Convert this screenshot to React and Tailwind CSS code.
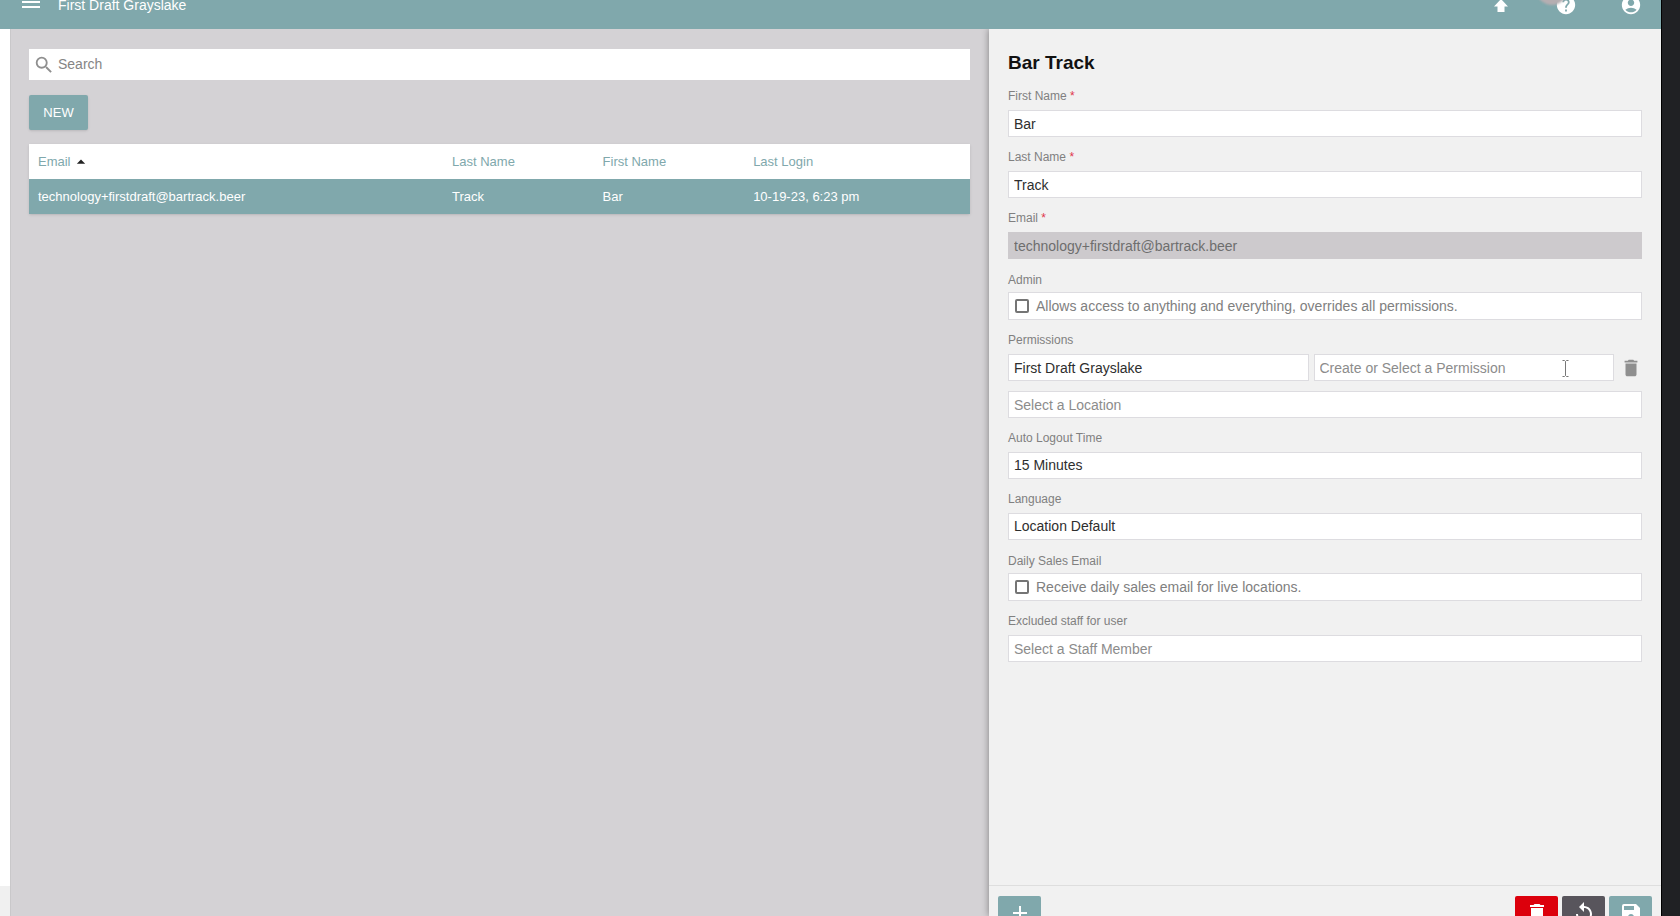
import { useState } from 'react';
import {
  MdMenu,
  MdSearch,
  MdHelp,
  MdAccountCircle,
  MdDelete,
  MdAdd,
  MdReplay,
  MdSave,
  MdArrowDropUp,
} from 'react-icons/md';

const users = [
  {
    email: 'technology+firstdraft@bartrack.beer',
    lastName: 'Track',
    firstName: 'Bar',
    lastLogin: '10-19-23, 6:23 pm',
  },
];

const inputClass =
  'block h-[27px] w-full min-w-0 appearance-none rounded-none border border-[#dddce0] bg-white px-[5px] text-[14px] text-[#2e2e2e] placeholder:text-[#8c8c8c] outline-none';

function Field({ id, label, required, children }) {
  return (
    <div>
      <label htmlFor={id} className="block h-[34px] pt-[12px] text-[12px] leading-[16px] text-[#808080]">
        {label} {required && <span className="text-[#e0364c]">*</span>}
      </label>
      {children}
    </div>
  );
}

function CheckField({ id, label, text }) {
  const [checked, setChecked] = useState(false);

  return (
    <div>
      <div className="h-[33px] pt-[13px] text-[12px] leading-[16px] text-[#808080]">{label}</div>
      <label
        htmlFor={id}
        className="flex h-[28px] items-center gap-[7px] border border-[#dddce0] bg-white px-[6px] text-[14px] text-[#808080]"
      >
        <input
          id={id}
          type="checkbox"
          checked={checked}
          onChange={(e) => setChecked(e.target.checked)}
          className="h-[14px] w-[14px] appearance-none rounded-[2px] border-2 border-[#757575] bg-white checked:bg-[#757575]"
        />
        {text}
      </label>
    </div>
  );
}

function Header() {
  return (
    <header className="shrink-0 overflow-hidden bg-[#80a8ac] text-white">
      <div className="-mt-[19px] flex h-12 items-center px-[19px]">
        <button type="button" aria-label="Menu" className="pb-[6px]">
          <MdMenu size={24} />
        </button>
        <span className="ml-[15px] text-[14px] leading-none">First Draft Grayslake</span>
        <div className="ml-auto flex items-center gap-[43px]">
          <button type="button" aria-label="Upload">
            <svg width="22" height="22" viewBox="0 0 22 22" fill="currentColor">
              <path d="M11 5l7 7.500h-3.500V18h-7v-5.500H4z" />
            </svg>
          </button>
          <button type="button" aria-label="Help" className="relative">
            <MdHelp size={22} />
            <span className="absolute right-[9px] bottom-[11px] h-8 w-8 rounded-full bg-[#b5aeb1] blur-[1px]" />
          </button>
          <button type="button" aria-label="Account">
            <MdAccountCircle size={22} />
          </button>
        </div>
      </div>
    </header>
  );
}

function UserList() {
  return (
    <main className="min-w-0 flex-1 border-l border-[#c9c8ca] bg-[#d4d2d5] pt-5 pr-[19px] pl-[18px]">
      <div className="flex h-[31px] items-center bg-white pl-1">
        <MdSearch size={22} className="text-[#8f8f8f]" />
        <input
          type="text"
          aria-label="Search"
          placeholder="Search"
          className="ml-[3px] min-w-0 flex-1 text-[14px] text-[#333] outline-none placeholder:text-[#858585]"
        />
      </div>
      <button
        type="button"
        className="mt-[15px] block h-[35px] w-[59px] rounded-[2px] bg-[#80a8ac] text-[13px] text-white shadow-sm"
      >
        NEW
      </button>
      <table className="mt-[14px] w-full table-fixed text-left text-[13px] shadow-sm">
        <thead className="bg-white text-[#80a8ac]">
          <tr className="h-[35px]">
            <th className="w-[44%] pl-[9px] font-normal">
              <span className="flex items-center">
                Email
                <MdArrowDropUp size={20} className="text-[#222]" />
              </span>
            </th>
            <th className="w-[16%] pl-[9px] font-normal">Last Name</th>
            <th className="w-[16%] pl-[9px] font-normal">First Name</th>
            <th className="pl-[9px] font-normal">Last Login</th>
          </tr>
        </thead>
        <tbody className="bg-[#80a8ac] text-white">
          {users.map((user) => (
            <tr key={user.email} className="h-[35px]">
              <td className="pl-[9px]">{user.email}</td>
              <td className="pl-[9px]">{user.lastName}</td>
              <td className="pl-[9px]">{user.firstName}</td>
              <td className="pl-[9px]">{user.lastLogin}</td>
            </tr>
          ))}
        </tbody>
      </table>
    </main>
  );
}

function UserForm() {
  return (
    <aside className="relative flex w-[40vw] shrink-0 flex-col bg-[#f1f1f1] shadow-[0_0_7px_rgba(0,0,0,0.4)]">
      <form className="min-h-0 flex-1 overflow-hidden px-[19px] pt-[22px]">
        <h1 className="h-[25px] text-[19px] leading-[24px] font-bold text-[#111]">Bar Track</h1>
        <Field id="firstName" label="First Name" required>
          <input id="firstName" type="text" defaultValue="Bar" className={inputClass} />
        </Field>
        <Field id="lastName" label="Last Name" required>
          <input id="lastName" type="text" defaultValue="Track" className={inputClass} />
        </Field>
        <Field id="email" label="Email" required>
          <input
            id="email"
            type="text"
            disabled
            defaultValue="technology+firstdraft@bartrack.beer"
            className="block h-[27px] w-full border border-[#cdcacd] bg-[#cdcacd] px-[5px] text-[14px] text-[#6e6e6e]"
          />
        </Field>
        <CheckField
          id="admin"
          label="Admin"
          text="Allows access to anything and everything, overrides all permissions."
        />
        <Field id="permissionLocation" label="Permissions">
          <div className="grid grid-cols-[1fr_1fr_23px] gap-[5px]">
            <input
              id="permissionLocation"
              type="text"
              defaultValue="First Draft Grayslake"
              className={inputClass}
            />
            <div className="relative min-w-0">
              <input
                type="text"
                aria-label="Permission"
                placeholder="Create or Select a Permission"
                className={inputClass}
              />
              {/* text cursor */}
              <svg
                className="pointer-events-none absolute top-[6px] right-[45px]"
                width="7"
                height="17"
                viewBox="0 0 7 17"
                fill="none"
                stroke="#777"
              >
                <path d="M.5.500h2l1 1 1-1h2M3.500 1.500v14M.5 16.500h2l1-1 1 1h2" />
              </svg>
            </div>
            <button
              type="button"
              aria-label="Remove permission"
              className="flex items-center justify-center text-[#8f8f8f]"
            >
              <MdDelete size={22} />
            </button>
          </div>
        </Field>
        <input
          type="text"
          aria-label="Location"
          placeholder="Select a Location"
          className={`${inputClass} mt-[10px]`}
        />
        <Field id="logout" label="Auto Logout Time">
          <select id="logout" className={inputClass}>
            <option>15 Minutes</option>
          </select>
        </Field>
        <Field id="language" label="Language">
          <select id="language" className={inputClass}>
            <option>Location Default</option>
          </select>
        </Field>
        <CheckField
          id="dailySales"
          label="Daily Sales Email"
          text="Receive daily sales email for live locations."
        />
        <Field id="staff" label="Excluded staff for user">
          <input id="staff" type="text" placeholder="Select a Staff Member" className={inputClass} />
        </Field>
      </form>

      {/* Action bar runs past the bottom of the window */}
      <div className="flex h-[31px] shrink-0 gap-1 overflow-hidden border-t border-[#dedede] px-[9px] pt-[10px]">
        <button
          type="button"
          aria-label="Add"
          className="mr-auto flex h-[34px] w-[43px] items-center justify-center rounded-t-[2px] bg-[#80a8ac] text-white"
        >
          <MdAdd size={24} />
        </button>
        <button
          type="button"
          aria-label="Delete"
          className="flex h-[34px] w-[43px] items-center justify-center rounded-t-[2px] bg-[#dc000c] text-white"
        >
          <MdDelete size={24} />
        </button>
        <button
          type="button"
          aria-label="Reset"
          className="flex h-[34px] w-[43px] items-center justify-center rounded-t-[2px] bg-[#58555c] text-white"
        >
          <MdReplay size={24} />
        </button>
        <button
          type="button"
          aria-label="Save"
          className="flex h-[34px] w-[43px] items-center justify-center rounded-t-[2px] bg-[#80a8ac] text-white"
        >
          <MdSave size={24} />
        </button>
      </div>
    </aside>
  );
}

export default function App() {
  return (
    <div className="flex h-screen overflow-hidden bg-[#202124] font-['Liberation_Sans',Arial,sans-serif]">
      <div className="flex min-w-0 flex-1 flex-col">
        <Header />
        <div className="flex min-h-0 flex-1 overflow-hidden">
          <div className="flex w-[10px] shrink-0 flex-col bg-white">
            <div className="mt-auto h-[30px] bg-[#f0f0f0]" />
          </div>
          <UserList />
          <UserForm />
        </div>
      </div>
      <div className="w-[19px] shrink-0 border-l border-black" />
    </div>
  );
}
